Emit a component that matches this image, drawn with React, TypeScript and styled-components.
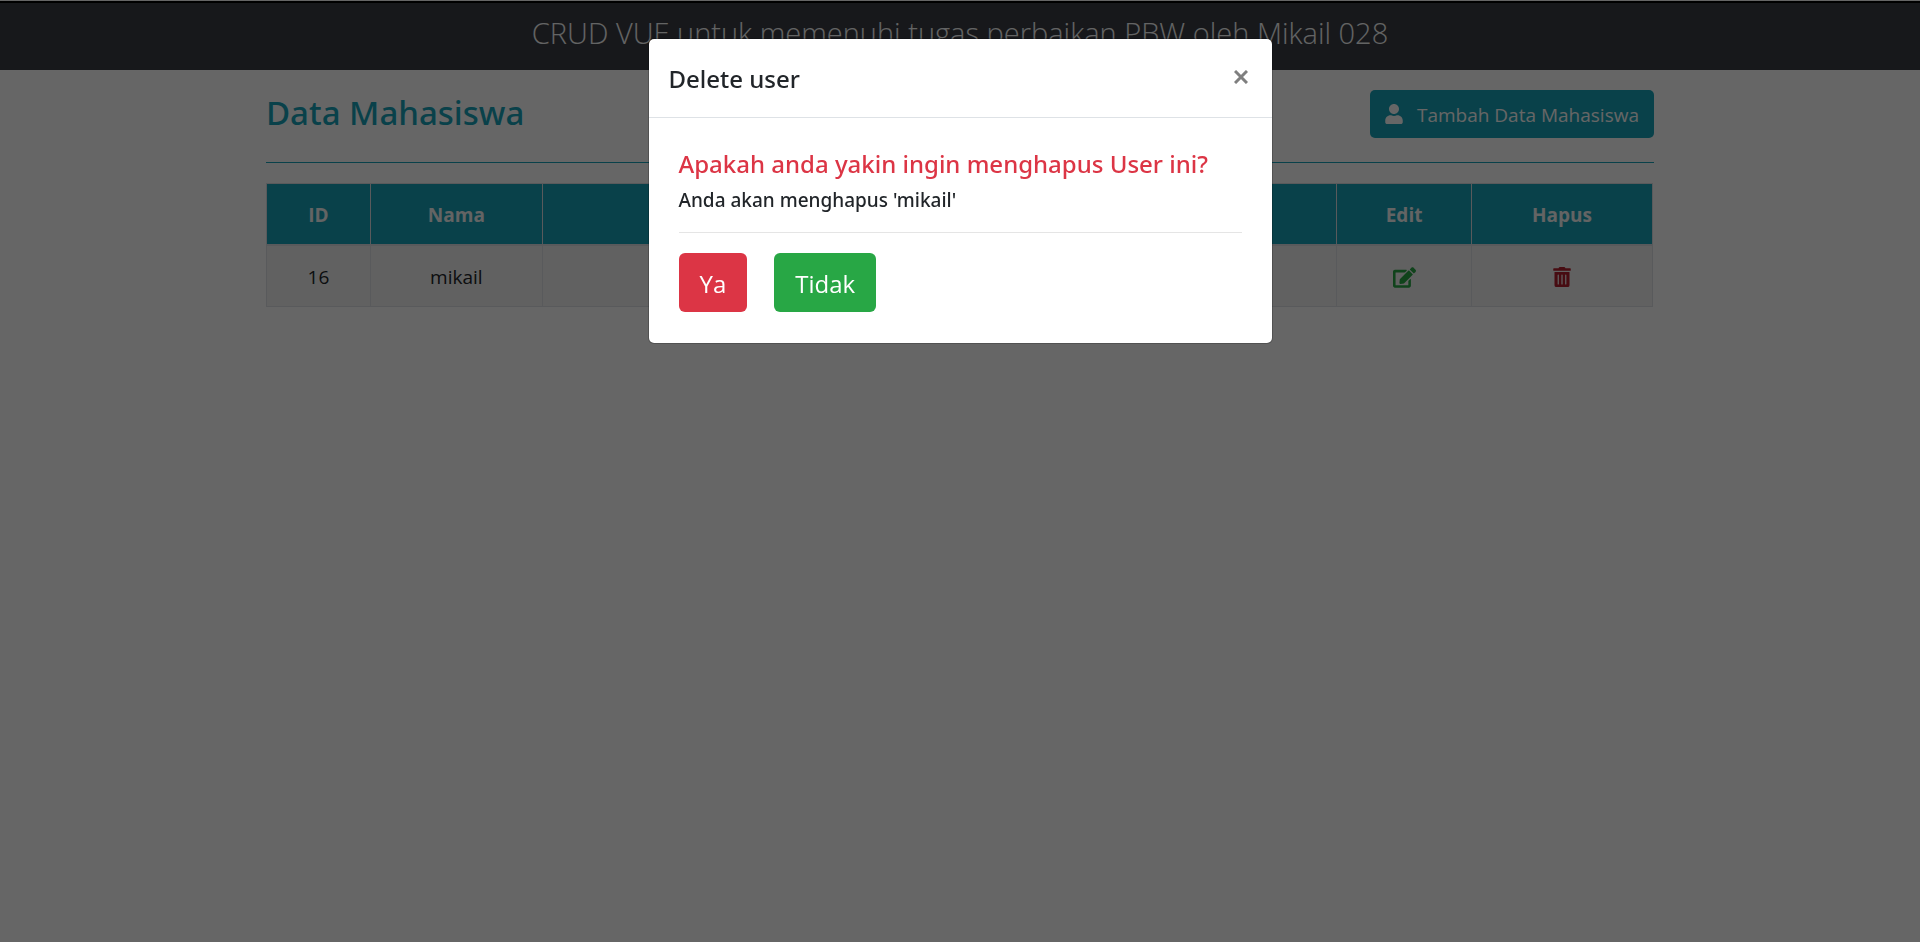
import React from "react";
import styled, { createGlobalStyle, css } from "styled-components";
import { FaEdit, FaUser } from "react-icons/fa";

const Global = createGlobalStyle`
  *, *::before, *::after { box-sizing: border-box; }
  body {
    margin: 0;
    background: #fff;
    color: #212529;
    font: 400 19px/30px "Open Sans", "Noto Sans", sans-serif;
  }
  h1, h2, h3, h4, p { margin: 0; }
`;

const Frame = styled.div`
  min-height: 100vh;
  border-top: 1px solid #fff;
`;

const Banner = styled.header`
  border-top: 2px solid #000;
  background: #3a3d44;
  padding: 10px 20px 17px;
  text-align: center;
`;

const BannerTitle = styled.h1`
  font-size: 29px;
  font-weight: 300;
  line-height: 40px;
  color: #f8f9fa;
`;

const Container = styled.main`
  max-width: 1428px;
  margin: 0 auto;
  padding: 20px;
`;

const Toolbar = styled.div`
  display: flex;
  justify-content: space-between;
  align-items: flex-start;
  padding-bottom: 24px;
  border-bottom: 1px solid #17a2b8;
  margin-bottom: 20px;
`;

const medium = css`
  font-family: "Noto Sans", "Open Sans", sans-serif;
  font-weight: 500;
`;

const Heading = styled.h2`
  ${medium}
  font-size: 33px;
  line-height: 46px;
  color: #17a2b8;
`;

const AddButton = styled.button`
  display: flex;
  align-items: center;
  gap: 14px;
  height: 48px;
  padding: 2px 15px 0;
  border: 0;
  border-radius: 5px;
  background: #17a2b8;
  color: #fff;
  font: inherit;
  svg { width: 18px; height: 20px; margin-bottom: 2px; }
`;

const Table = styled.table`
  width: calc(100% - 1px);
  border-collapse: collapse;
  table-layout: fixed;
  text-align: center;
`;

const cell = css`
  border: 1px solid #dee2e6;
  padding: 16px 15px 14px;
`;

const HeadCell = styled.th`
  ${cell}
  background: #17a2b8;
  border-bottom-width: 2px;
  color: #f8f9fa;
  font-weight: 700;
`;

const Cell = styled.td`
  ${cell}
  background: #f2f2f2;
`;

const Column = styled.col<{ $share?: number }>`
  width: ${({ $share }) => ($share ? `${$share}%` : "auto")};
`;

const IconButton = styled.button<{ $tone: string }>`
  display: flex;
  margin: 0 auto;
  padding: 0;
  border: 0;
  background: none;
  color: ${({ $tone }) => $tone};
`;

const Overlay = styled.div`
  position: fixed;
  inset: 0;
  padding: 38px 20px;
  background: rgba(0, 0, 0, 0.6);
`;

const Dialog = styled.section`
  max-width: 625px;
  margin: 0 auto;
  border: 1px solid rgba(0, 0, 0, 0.2);
  border-radius: 6px;
  background: #fff;
  background-clip: padding-box;
`;

const DialogHeader = styled.div`
  display: flex;
  justify-content: space-between;
  align-items: flex-start;
  padding: 20px 20px 18px;
  border-bottom: 1px solid #dee2e6;
`;

const DialogTitle = styled.h3`
  ${medium}
  font-size: 24px;
  line-height: 40px;
`;

const CloseButton = styled.button`
  padding: 11px 4px;
  border: 0;
  background: none;
  color: #7f7f7f;
  line-height: 0;
`;

const DialogBody = styled.div`
  padding: 30px 30px 31px;
`;

const Question = styled.h4`
  ${medium}
  margin-bottom: 8px;
  color: #dc3545;
  font-size: 24px;
  line-height: 32px;
`;

const Detail = styled.p`
  ${medium}
  line-height: 24px;
`;

const Rule = styled.hr`
  margin: 20px 0;
  border: 0;
  border-top: 1px solid #e5e5e5;
`;

const Actions = styled.div`
  display: flex;
  gap: 27px;
`;

const Action = styled.button<{ $tone: string }>`
  height: 59px;
  padding: 2px 21px 0;
  border: 0;
  border-radius: 6px;
  background: ${({ $tone }) => $tone};
  color: #fff;
  font: inherit;
  font-size: 24px;
`;

const TrashIcon = () => (
  <svg width="18" height="20" viewBox="0 0 448 512" fill="currentColor" aria-hidden="true">
    <path
      fillRule="evenodd"
      d="M432 32H312l-9.400-18.700A24 24 0 0 0 281.100 0H166.800a23.720 23.720 0 0 0-21.400 13.300L136 32H16A16 16 0 0 0 0 48v32a16 16 0 0 0 16 16h416a16 16 0 0 0 16-16V48a16 16 0 0 0-16-16zM32 128v336a48 48 0 0 0 48 48h288a48 48 0 0 0 48-48V128zm112 80v224a16 16 0 0 1-32 0V208a16 16 0 0 1 32 0zm96 0v224a16 16 0 0 1-32 0V208a16 16 0 0 1 32 0zm96 0v224a16 16 0 0 1-32 0V208a16 16 0 0 1 32 0z"
    />
  </svg>
);

const CloseIcon = () => (
  <svg width="14" height="14" viewBox="0 0 14 14" stroke="currentColor" strokeWidth="3" aria-hidden="true">
    <path d="M1 1l12 12M13 1L1 13" />
  </svg>
);

const students = [{ id: 16, name: "mikail" }];

export default function App() {
  return (
    <>
      <Global />
      <Frame>
        <Banner>
          <BannerTitle>CRUD VUE untuk memenuhi tugas perbaikan PBW oleh Mikail 028</BannerTitle>
        </Banner>
        <Container>
          <Toolbar>
            <Heading>Data Mahasiswa</Heading>
            <AddButton type="button">
              <FaUser aria-hidden />
              Tambah Data Mahasiswa
            </AddButton>
          </Toolbar>
          <Table>
            <colgroup>
              <Column $share={7.5} />
              <Column $share={12.4} />
              <Column />
              <Column $share={9.75} />
              <Column $share={13.05} />
            </colgroup>
            <thead>
              <tr>
                <HeadCell>ID</HeadCell>
                <HeadCell>Nama</HeadCell>
                <HeadCell />
                <HeadCell>Edit</HeadCell>
                <HeadCell>Hapus</HeadCell>
              </tr>
            </thead>
            <tbody>
              {students.map(({ id, name }) => (
                <tr key={id}>
                  <Cell>{id}</Cell>
                  <Cell>{name}</Cell>
                  <Cell />
                  <Cell>
                    <IconButton type="button" $tone="#28a745" aria-label="Edit">
                      <FaEdit size={23} />
                    </IconButton>
                  </Cell>
                  <Cell>
                    <IconButton type="button" $tone="#b21f2d" aria-label="Hapus">
                      <TrashIcon />
                    </IconButton>
                  </Cell>
                </tr>
              ))}
            </tbody>
          </Table>
        </Container>
      </Frame>
      <Overlay>
        <Dialog role="dialog" aria-modal="true" aria-labelledby="dialog-title">
          <DialogHeader>
            <DialogTitle id="dialog-title">Delete user</DialogTitle>
            <CloseButton type="button" aria-label="Close">
              <CloseIcon />
            </CloseButton>
          </DialogHeader>
          <DialogBody>
            <Question>Apakah anda yakin ingin menghapus User ini?</Question>
            <Detail>Anda akan menghapus 'mikail'</Detail>
            <Rule />
            <Actions>
              <Action type="button" $tone="#dc3545">Ya</Action>
              <Action type="button" $tone="#28a745">Tidak</Action>
            </Actions>
          </DialogBody>
        </Dialog>
      </Overlay>
    </>
  );
}
